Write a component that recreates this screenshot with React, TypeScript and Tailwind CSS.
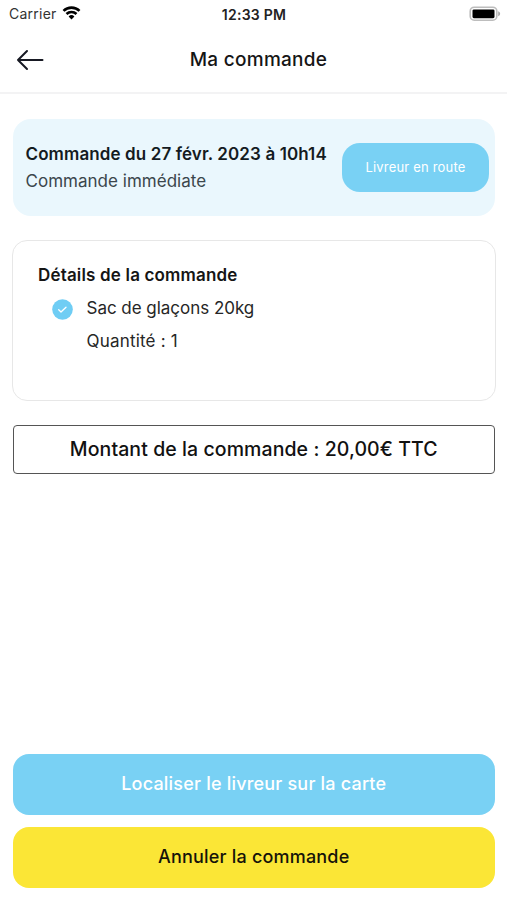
import React from 'react'

function StatusBar() {
  return (
    <div className="flex h-7 items-center justify-between pl-[9px] pr-[6px]">
      <div className="flex w-[120px] items-center gap-[5px]">
        <span className="-mt-[2px] text-[14px] tracking-[0.25px] text-[#333]">Carrier</span>
        <svg width="19" height="14" viewBox="0 0 18 14" fill="none" stroke="#000" strokeWidth="2.6" className="-mt-[3px]">
          <path d="M1 4.9a11.3 11.3 0 0 1 16 0" />
          <path d="M4 8a7.1 7.1 0 0 1 10 0" />
          <path d="M9 13.4 6.1 10.5a4.1 4.1 0 0 1 5.8 0z" fill="#000" stroke="none" />
        </svg>
      </div>
      <span className="mr-[2px] text-[14px] font-semibold tracking-[0.25px] text-[#222]">12:33 PM</span>
      <div className="flex w-[120px] justify-end">
        <svg width="32" height="16" viewBox="0 0 32 16">
          <rect x="1.2" y="1.2" width="26.6" height="13" rx="4" fill="#fff" stroke="#bdbdbd" strokeWidth="1.6" />
          <rect x="3.5" y="3.4" width="22" height="8.8" rx="1.4" fill="#000" />
          <path d="M29.2 5.2c1.2.4 1.9 1.3 1.9 2.5s-.7 2.1-1.9 2.5z" fill="#aaa" />
        </svg>
      </div>
    </div>
  )
}

function Header() {
  return (
    <header className="flex h-[66px] items-center border-b-2 border-[#f3f3f4] px-4">
      <button aria-label="Retour" className="w-[30px]">
        <svg width="28" height="22" viewBox="0 0 28 22" fill="none" stroke="#171923" strokeWidth="2" strokeLinecap="round" strokeLinejoin="round">
          <path d="M26.5 11H2M11 2 2 11l9 9" />
        </svg>
      </button>
      <h1 className="flex-1 text-center text-[19px] font-medium tracking-[0.28px] text-[#151515]">Ma commande</h1>
      <div className="w-5" />
    </header>
  )
}

export default function App() {
  return (
    <div className="flex h-[900px] w-[507px] flex-col bg-white font-['Inter',sans-serif]">
      <StatusBar />
      <Header />
      <main className="flex flex-1 flex-col pb-[12.5px] pl-[13px] pr-[12.5px] pt-[25px]">
        <section className="flex h-[97px] items-center justify-between rounded-[18px] bg-[#eaf7fd] pl-[12.5px] pr-[5.5px]">
          <div className="whitespace-nowrap">
            <p className="text-[17px] font-semibold leading-[27px] tracking-[0.11px] text-[#141b1f]">Commande du 27 févr. 2023 à 10h14</p>
            <p className="text-[17px] leading-[27px] tracking-[0.02px] text-[#3b464c]">Commande immédiate</p>
          </div>
          <span className="-mt-px flex h-[49px] w-[147px] items-center justify-center rounded-[18px] bg-[#79d1f4] pt-px text-[13px] tracking-[0.18px] text-white">
            Livreur en route
          </span>
        </section>

        <section className="-mx-px mt-6 h-[161px] rounded-[15px] border border-[#e7e7e7] px-[25px] pt-[21px] text-[17px]">
          <h2 className="font-semibold leading-[27px] tracking-[0.17px] text-[#151515]">Détails de la commande</h2>
          <div className="mt-[3px] flex pl-[14px]">
            <svg width="21" height="21" viewBox="0 0 21 21" className="mt-[7px]">
              <circle cx="10.5" cy="10.5" r="10.3" fill="#6fcdf4" />
              <path d="m6.7 10.8 2.3 2.2 5-4.8" fill="none" stroke="#fff" strokeWidth="1.3" strokeLinecap="round" strokeLinejoin="round" />
            </svg>
            <div className="ml-[13.5px] leading-[33px] text-[#262626]">
              <p className="tracking-[-0.03px]">Sac de glaçons 20kg</p>
              <p className="tracking-[0.2px]">Quantité : 1</p>
            </div>
          </div>
        </section>

        <div className="mt-6 flex h-[49px] items-center justify-center rounded-[4px] border border-[#555] text-[19.5px] font-medium tracking-[0.08px] text-[#111]">
          Montant de la commande : 20,00€ TTC
        </div>

        <div className="mt-auto flex flex-col gap-3 text-[18px] font-medium tracking-[0.2px]">
          <button className="h-[61px] rounded-[16px] bg-[#79d1f4] pb-px text-white">Localiser le livreur sur la carte</button>
          <button className="h-[61px] rounded-[16px] bg-[#fbe636] pb-px text-[#15130a]">Annuler la commande</button>
        </div>
      </main>
    </div>
  )
}
